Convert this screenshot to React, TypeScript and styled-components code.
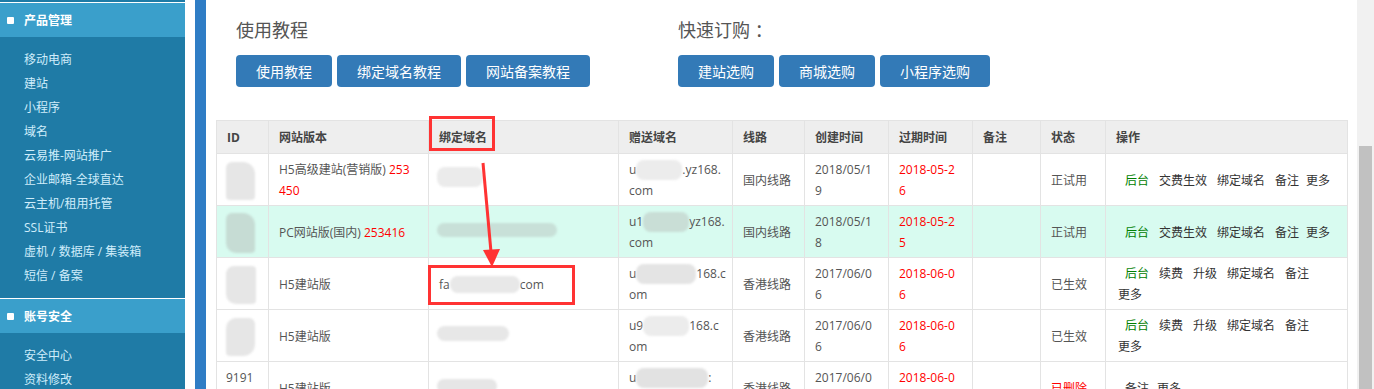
import React from 'react';
import styled, { createGlobalStyle } from 'styled-components';

const GlobalStyle = createGlobalStyle`
  html, body {
    margin: 0;
    padding: 0;
    background: #fff;
    overflow: hidden;
  }
  body {
    font-family: 'Open Sans', 'Noto Sans CJK SC', sans-serif;
  }
`;

const Page = styled.div`
  display: flex;
  height: 389px;
  overflow: hidden;
  background: #fff;
`;

const Sidebar = styled.aside`
  width: 185px;
  flex: none;
  padding-top: 2px;
  background: #1f7ba6;
`;

const Section = styled.div`
  border-top: 1px solid #fff;
`;

const SectionHead = styled.div`
  display: flex;
  align-items: center;
  height: 34px;
  padding-left: 7px;
  background: #3a9fcb;
  color: #fff;
  font-size: 12px;
  font-weight: 600;
`;

const Bullet = styled.span`
  width: 7px;
  height: 7px;
  margin-right: 10px;
  border-radius: 1px;
  background: #fff;
`;

const SideList = styled.ul`
  list-style: none;
  margin: 0;
  padding: 11px 0 10px 24px;
`;

const SideItem = styled.li`
  height: 24px;
  line-height: 24px;
  font-size: 12px;
  color: #cfedfb;
  white-space: nowrap;
`;

const Main = styled.main`
  position: relative;
  flex: 1;
  min-width: 0;
  margin-left: 10px;
  padding: 0 10px;
  border-left: 11px solid #2f7dc5;
  overflow: hidden;
`;

const Intro = styled.div`
  display: flex;
  padding: 18px 0 0 20px;
  margin-bottom: 33px;
`;

const Group = styled.div`
  width: 442px;
`;

const GroupTitle = styled.div`
  height: 24px;
  line-height: 24px;
  margin-bottom: 13px;
  font-size: 18px;
  color: #555;
`;

const BtnRow = styled.div`
  display: flex;
  gap: 5px;
`;

const Btn = styled.button`
  height: 32px;
  padding: 0 20px;
  border: none;
  border-radius: 4px;
  background: #337ab7;
  color: #fff;
  font-family: inherit;
  font-size: 14px;
  white-space: nowrap;
`;

const Table = styled.table`
  width: 1131px;
  table-layout: fixed;
  border-collapse: collapse;
  font-size: 12px;
  color: #555;
`;

const Col = styled.col<{ $w: number }>`
  width: ${(p) => p.$w}px;
`;

const Th = styled.th`
  height: 32px;
  padding: 0 10px;
  border: 1px solid #e3e3e3;
  background: #eee;
  color: #444;
  font-weight: bold;
  text-align: left;
  white-space: nowrap;
`;

const Tr = styled.tr<{ $mint?: boolean }>`
  background: ${(p) => (p.$mint ? '#d8fbf0' : '#fff')};
`;

const Td = styled.td<{ $pad?: number }>`
  height: 42px;
  padding: 5px ${(p) => p.$pad ?? 10}px 4px;
  border: 1px solid #e3e3e3;
  line-height: 21px;
  vertical-align: middle;
  white-space: nowrap;
  overflow: hidden;
`;

const Line = styled.div<{ $indent?: number }>`
  display: flex;
  align-items: center;
  height: 21px;
  padding-left: ${(p) => p.$indent ?? 0}px;
  white-space: nowrap;
`;

const Red = styled.span`
  color: #f00;
`;

const Blob = styled.span<{ $w: number; $h: number; $c?: string; $r?: string }>`
  display: inline-block;
  flex: none;
  width: ${(p) => p.$w}px;
  height: ${(p) => p.$h}px;
  border-radius: ${(p) => p.$r ?? '8px'};
  background: ${(p) => p.$c ?? '#e6e6e6'};
  filter: blur(1px);
`;

const IdBlob = styled(Blob)`
  display: block;
  margin-top: 1px;
`;

const Op = styled.span<{ $green?: boolean; $gap?: number }>`
  margin-right: ${(p) => p.$gap ?? 10}px;
  color: ${(p) => (p.$green ? '#008000' : '#333')};
`;

const Mark = styled.div<{ $x: number; $y: number; $w: number; $h: number }>`
  position: absolute;
  left: ${(p) => p.$x}px;
  top: ${(p) => p.$y}px;
  width: ${(p) => p.$w}px;
  height: ${(p) => p.$h}px;
  box-sizing: border-box;
  border: 3px solid #f33;
`;

const ArrowSvg = styled.svg`
  position: absolute;
  left: 270px;
  top: 158px;
`;

const ScrollTrack = styled.div`
  display: flex;
  flex-direction: column;
  width: 17px;
  flex: none;
  background: #f1f1f1;
`;

const ScrollThumb = styled.div`
  flex: 1;
  margin: 146px 2px 0 2px;
  background: #c1c1c1;
`;

const menuA = [
  '移动电商',
  '建站',
  '小程序',
  '域名',
  '云易推-网站推广',
  '企业邮箱-全球直达',
  '云主机/租用托管',
  'SSL证书',
  '虚机 / 数据库 / 集装箱',
  '短信 / 备案',
];
const menuB = ['安全中心', '资料修改'];

const heads: [string, number][] = [
  ['ID', 52],
  ['网站版本', 160],
  ['绑定域名', 190],
  ['赠送域名', 114],
  ['线路', 72],
  ['创建时间', 84],
  ['过期时间', 84],
  ['备注', 68],
  ['状态', 65],
  ['操作', 242],
];

const OpsFull = () => (
  <Line $indent={7}>
    <Op $green>后台</Op>
    <Op>交费生效</Op>
    <Op>绑定域名</Op>
    <Op $gap={7}>备注</Op>
    <Op>更多</Op>
  </Line>
);

const OpsWrap = () => (
  <>
    <Line $indent={7}>
      <Op $green>后台</Op>
      <Op>续费</Op>
      <Op>升级</Op>
      <Op>绑定域名</Op>
      <Op>备注</Op>
    </Line>
    <Line>
      <Op>更多</Op>
    </Line>
  </>
);

const Two = ({ a, b }: { a: React.ReactNode; b: React.ReactNode }) => (
  <>
    <Line>{a}</Line>
    <Line>{b}</Line>
  </>
);

export default function App() {
  return (
    <>
      <GlobalStyle />
      <Page>
        <Sidebar>
          <Section>
            <SectionHead>
              <Bullet />
              产品管理
            </SectionHead>
            <SideList>
              {menuA.map((m) => (
                <SideItem key={m}>{m}</SideItem>
              ))}
            </SideList>
          </Section>
          <Section>
            <SectionHead>
              <Bullet />
              账号安全
            </SectionHead>
            <SideList>
              {menuB.map((m) => (
                <SideItem key={m}>{m}</SideItem>
              ))}
            </SideList>
          </Section>
        </Sidebar>

        <Main>
          <Intro>
            <Group>
              <GroupTitle>使用教程</GroupTitle>
              <BtnRow>
                <Btn>使用教程</Btn>
                <Btn>绑定域名教程</Btn>
                <Btn>网站备案教程</Btn>
              </BtnRow>
            </Group>
            <Group>
              <GroupTitle>快速订购 ：</GroupTitle>
              <BtnRow>
                <Btn>建站选购</Btn>
                <Btn>商城选购</Btn>
                <Btn>小程序选购</Btn>
              </BtnRow>
            </Group>
          </Intro>

          <Table>
            <colgroup>
              {heads.map(([h, w]) => (
                <Col key={h} $w={w} />
              ))}
            </colgroup>
            <thead>
              <tr>
                {heads.map(([h]) => (
                  <Th key={h}>{h}</Th>
                ))}
              </tr>
            </thead>
            <tbody>
              <Tr>
                <Td $pad={9}>
                  <IdBlob $w={29} $h={38} $r="6px 12px 4px 4px" />
                </Td>
                <Td>
                  <Two a={<>H5高级建站(营销版)&nbsp;<Red>253</Red></>} b={<Red>450</Red>} />
                </Td>
                <Td $pad={8}>
                  <Blob $w={46} $h={20} $c="#ebebeb" />
                </Td>
                <Td>
                  <Two a={<>u<Blob $w={46} $h={20} $c="#ececec" />.yz168.</>} b="com" />
                </Td>
                <Td>国内线路</Td>
                <Td>
                  <Two a="2018/05/1" b="9" />
                </Td>
                <Td>
                  <Red>
                    <Two a="2018-05-2" b="6" />
                  </Red>
                </Td>
                <Td />
                <Td>正试用</Td>
                <Td $pad={12}>
                  <OpsFull />
                </Td>
              </Tr>
              <Tr $mint>
                <Td $pad={9}>
                  <IdBlob $w={29} $h={40} $c="#c6dcd4" $r="6px 12px 4px 10px" />
                </Td>
                <Td>
                  PC网站版(国内) <Red>253416</Red>
                </Td>
                <Td $pad={8}>
                  <Blob $w={120} $h={14} $c="#c8e0d8" />
                </Td>
                <Td>
                  <Two a={<>u1<Blob $w={46} $h={20} $c="#c9ded6" />yz168.</>} b="com" />
                </Td>
                <Td>国内线路</Td>
                <Td>
                  <Two a="2018/05/1" b="8" />
                </Td>
                <Td>
                  <Red>
                    <Two a="2018-05-2" b="5" />
                  </Red>
                </Td>
                <Td />
                <Td>正试用</Td>
                <Td $pad={12}>
                  <OpsFull />
                </Td>
              </Tr>
              <Tr>
                <Td $pad={9}>
                  <IdBlob $w={30} $h={38} $r="8px 4px 4px 10px" />
                </Td>
                <Td>H5建站版</Td>
                <Td $pad={10}>
                  <Line>
                    fa
                    <Blob $w={70} $h={17} $c="#e8e8e8" />
                    com
                  </Line>
                </Td>
                <Td>
                  <Two a={<>u<Blob $w={60} $h={20} $c="#e4e4e4" />168.c</>} b="om" />
                </Td>
                <Td>香港线路</Td>
                <Td>
                  <Two a="2017/06/0" b="6" />
                </Td>
                <Td>
                  <Red>
                    <Two a="2018-06-0" b="6" />
                  </Red>
                </Td>
                <Td />
                <Td>已生效</Td>
                <Td $pad={12}>
                  <OpsWrap />
                </Td>
              </Tr>
              <Tr>
                <Td $pad={9}>
                  <IdBlob $w={29} $h={38} $r="10px 6px 12px 4px" />
                </Td>
                <Td>H5建站版</Td>
                <Td $pad={8}>
                  <Blob $w={72} $h={15} $c="#e7e7e7" />
                </Td>
                <Td>
                  <Two a={<>u9<Blob $w={46} $h={20} $c="#ececec" />168.c</>} b="om" />
                </Td>
                <Td>香港线路</Td>
                <Td>
                  <Two a="2017/06/0" b="6" />
                </Td>
                <Td>
                  <Red>
                    <Two a="2018-06-0" b="6" />
                  </Red>
                </Td>
                <Td />
                <Td>已生效</Td>
                <Td $pad={12}>
                  <OpsWrap />
                </Td>
              </Tr>
              <Tr>
                <Td $pad={9}>
                  <Two a="9191" b={<Blob $w={30} $h={16} />} />
                </Td>
                <Td>H5建站版</Td>
                <Td $pad={8}>
                  <Blob $w={60} $h={14} />
                </Td>
                <Td>
                  <Two a={<>u<Blob $w={72} $h={20} $c="#e2e2e2" />:</>} b="om" />
                </Td>
                <Td>香港线路</Td>
                <Td>
                  <Two a="2017/06/0" b="6" />
                </Td>
                <Td>
                  <Red>
                    <Two a="2018-06-0" b="5" />
                  </Red>
                </Td>
                <Td />
                <Td>
                  <Red>已删除</Red>
                </Td>
                <Td $pad={12}>
                  <Line $indent={7}>
                    <Op $gap={8}>备注</Op>
                    <Op>更多</Op>
                  </Line>
                </Td>
              </Tr>
            </tbody>
          </Table>

          <Mark $x={223} $y={116} $w={66} $h={35} />
          <Mark $x={222} $y={265} $w={147} $h={40} />
          <ArrowSvg width="30" height="112" viewBox="0 0 30 112">
            <line x1="7" y1="5" x2="15" y2="94" stroke="#f33" strokeWidth="3" />
            <polygon points="7,92 24,91 16,109" fill="#f33" />
          </ArrowSvg>
        </Main>

        <ScrollTrack>
          <ScrollThumb />
        </ScrollTrack>
      </Page>
    </>
  );
}
